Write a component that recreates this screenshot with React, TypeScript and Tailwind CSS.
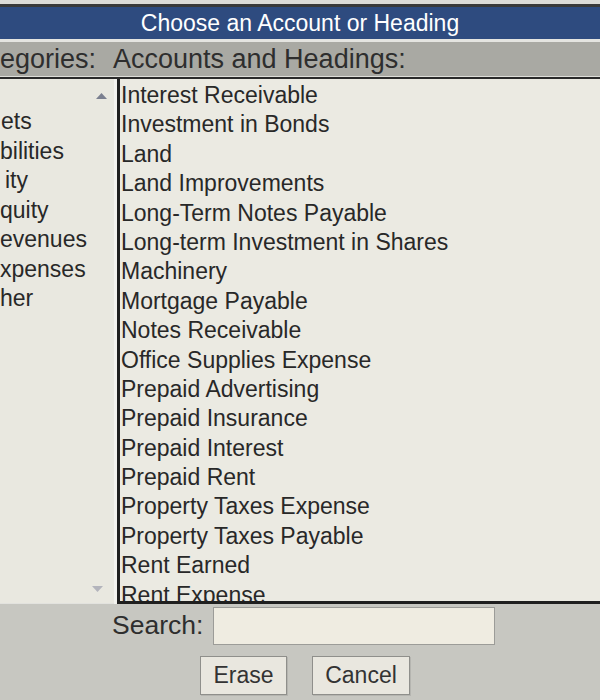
import React from "react";

const categories = [
  { label: "ets", shift: "ml-[1px]" },
  { label: "bilities", shift: "ml-0" },
  { label: "ity", shift: "ml-[5px]" },
  { label: "quity", shift: "ml-0" },
  { label: "evenues", shift: "ml-0" },
  { label: "xpenses", shift: "ml-0" },
  { label: "her", shift: "ml-0" },
];

const accounts = [
  "Interest Receivable",
  "Investment in Bonds",
  "Land",
  "Land Improvements",
  "Long-Term Notes Payable",
  "Long-term Investment in Shares",
  "Machinery",
  "Mortgage Payable",
  "Notes Receivable",
  "Office Supplies Expense",
  "Prepaid Advertising",
  "Prepaid Insurance",
  "Prepaid Interest",
  "Prepaid Rent",
  "Property Taxes Expense",
  "Property Taxes Payable",
  "Rent Earned",
  "Rent Expense",
];

export default function App() {
  return (
    <div className="flex h-[700px] w-[600px] flex-col overflow-hidden bg-[#c7c7c1] font-['Liberation_Sans',Arial,sans-serif] text-[#282828]">
      {/* Title bar */}
      <div className="h-[4px] shrink-0 bg-[#dddcd7]" />
      <div className="h-[3px] shrink-0 bg-[#3a3a3a]" />
      <div className="flex h-[32px] shrink-0 items-center justify-center bg-[#2e4b7f] text-[23px] text-white">
        Choose an Account or Heading
      </div>
      <div className="h-[3px] shrink-0 bg-[#e4e4e0]" />

      {/* Column headings */}
      <div className="flex h-[34px] shrink-0 items-center bg-[#a9a9a3] text-[27px] text-[#2e2e2e]">
        <span className="w-[113px] shrink-0">egories:</span>
        <span>Accounts and Headings:</span>
      </div>
      <div className="h-[1px] shrink-0 bg-[#deded9]" />
      <div className="h-[2px] shrink-0 bg-[#2a2a2a]" />

      {/* Lists */}
      <div className="flex h-[525px] shrink-0">
        <div className="flex w-[114px] shrink-0 border-b border-[#e2e2de] bg-[#e9e8e0]">
          <div className="flex flex-1 flex-col pt-[28px] text-[23px]">
            {categories.map((c) => (
              <div
                key={c.label}
                className={`h-[29.5px] whitespace-nowrap leading-[29.5px] ${c.shift}`}
              >
                {c.label}
              </div>
            ))}
          </div>
          <div className="flex w-[26px] shrink-0 flex-col items-center justify-between pb-[11px] pt-[14px]">
            <svg width="11" height="6" viewBox="0 0 11 6">
              <path d="M5.5 0 L11 6 L0 6 Z" fill="#7b8090" />
            </svg>
            <svg width="11" height="6" viewBox="0 0 11 6" className="-ml-[8px]">
              <path d="M0 0 L11 0 L5.5 6 Z" fill="#b3b4bc" />
            </svg>
          </div>
        </div>
        <div className="w-[3px] shrink-0 bg-[#f3f3ef]" />
        <div className="flex flex-1 flex-col overflow-hidden border-b-[3px] border-l-[3px] border-[#1f1f1f] bg-[#ebeae2] pl-[1px] pt-[2px] text-[23px]">
          {accounts.map((a) => (
            <div
              key={a}
              className="h-[29.4px] shrink-0 whitespace-nowrap leading-[29.4px]"
            >
              {a}
            </div>
          ))}
        </div>
      </div>

      {/* Search and buttons */}
      <div className="flex flex-1 flex-col pt-[3px]">
        <div className="flex h-[38px] items-center gap-[10px] pl-[112px]">
          <span className="text-[26.5px] text-[#2e2e2e]">Search:</span>
          <input
            type="text"
            className="h-[38px] w-[282px] border border-[#9c9c98] bg-[#efece1] px-2 text-[20px] outline-none"
          />
        </div>
        <div className="mt-[11px] flex gap-[25px] pl-[200px]">
          <button className="h-[39px] w-[87px] border border-[#8f8f8b] bg-[#e9e7df] text-[23px] text-[#333] shadow-[1px_1px_0_#b5b5b0]">
            Erase
          </button>
          <button className="h-[39px] w-[98px] border border-[#8f8f8b] bg-[#e9e7df] text-[23px] text-[#333] shadow-[1px_1px_0_#b5b5b0]">
            Cancel
          </button>
        </div>
      </div>
    </div>
  );
}
